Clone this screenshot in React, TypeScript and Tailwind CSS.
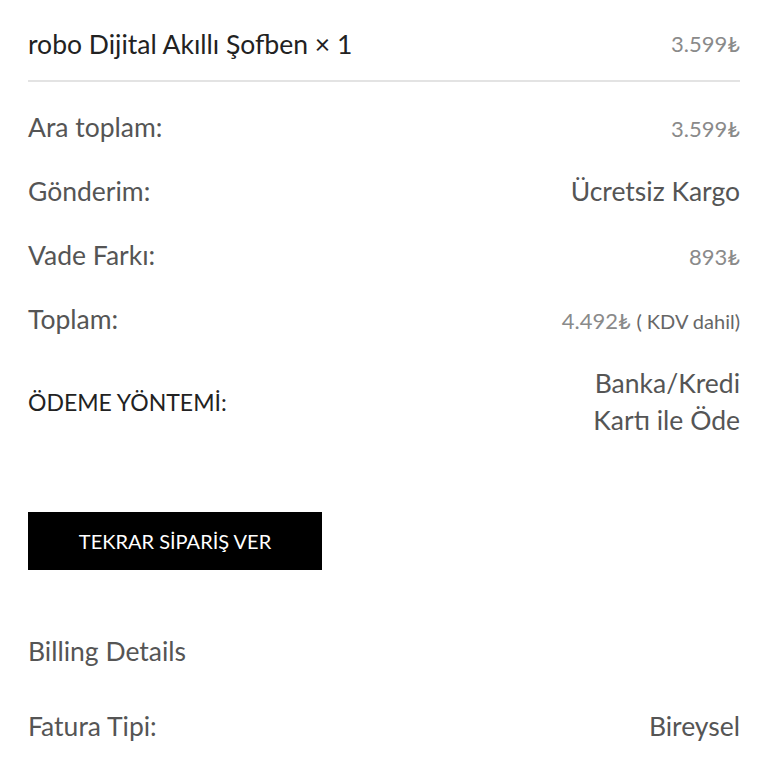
const rows = [
  { label: "Ara toplam:", value: <span className="text-[22px] text-[#8a8a8a]">3.599₺</span> },
  { label: "Gönderim:", value: <span className="text-[26.5px] text-[#555]">Ücretsiz Kargo</span> },
  { label: "Vade Farkı:", value: <span className="text-[22px] text-[#8a8a8a]">893₺</span> },
  {
    label: "Toplam:",
    value: (
      <span className="text-[22px] text-[#8a8a8a]">
        4.492₺ <span className="text-[20px] text-[#666]">( KDV dahil)</span>
      </span>
    ),
  },
];

export default function App() {
  return (
    <div className="min-h-[768px] bg-white px-[28px] font-['Lato',sans-serif]">
      <div className="flex items-center justify-between border-b-2 border-[#e3e3e3] pt-[26px] pb-[18px] leading-[36px]">
        <span className="text-[26.5px] text-[#222]">robo Dijital Akıllı Şofben × 1</span>
        <span className="text-[22px] text-[#8a8a8a]">3.599₺</span>
      </div>

      <div className="mt-[14px]">
        {rows.map((row) => (
          <div key={row.label} className="flex h-[64px] items-center justify-between">
            <span className="text-[26.5px] text-[#555]">{row.label}</span>
            {row.value}
          </div>
        ))}
        <div className="flex items-center justify-between py-[13px]">
          <span className="text-[23px] text-[#222]">ÖDEME YÖNTEMİ:</span>
          <span className="text-right text-[26.5px] leading-[37px] text-[#555]">
            Banka/Kredi
            <br />
            Kartı ile Öde
          </span>
        </div>
      </div>

      <button
        type="button"
        className="mt-[60px] flex h-[58px] w-[294px] items-center justify-center bg-black text-[20px] text-white"
      >
        TEKRAR SİPARİŞ VER
      </button>

      <h2 className="mt-[65px] text-[26.5px] leading-[32px] text-[#555]">Billing Details</h2>

      <div className="mt-[43px] flex items-center justify-between leading-[32px]">
        <span className="text-[26.5px] text-[#555]">Fatura Tipi:</span>
        <span className="text-[26.5px] text-[#555]">Bireysel</span>
      </div>
    </div>
  );
}
